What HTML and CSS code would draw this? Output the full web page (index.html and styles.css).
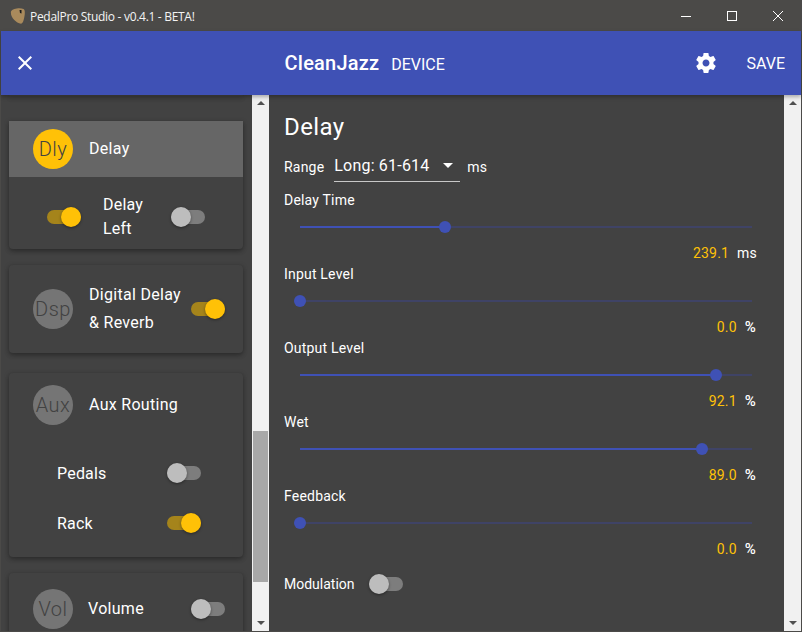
FILE: index.html
```html
<!DOCTYPE html>
<html lang="en">
<head>
    <meta charset="UTF-8">
    <title>PedalPro Studio</title>
    <link rel="stylesheet" href="styles.css">
</head>
<body>
<div class="window">
    <div class="titlebar">
        <svg class="app-icon" width="16" height="16" viewBox="0 0 16 16">
            <path d="M1 3.500 C2.500 0.500 10 -0.500 13.500 1 C15.500 2 15 7 13.500 12.500 C13 15 11.500 16 10 15.500 C6 14.500 0 9 1 3.500 Z" fill="#a98a5c"/>
            <path d="M9.500 2 L11.500 2 L11.500 5.500 L10 5 Z" fill="#1c1c1c"/>
        </svg>
        <span class="title-text">PedalPro Studio - v0.4.1 - BETA!</span>
        <div class="win-buttons">
            <svg width="46" height="30" viewBox="0 0 46 30"><path d="M18 15.500 H28" stroke="#fff" fill="none"/></svg>
            <svg width="46" height="30" viewBox="0 0 46 30"><rect x="18.500" y="10.500" width="9" height="9" stroke="#fff" fill="none"/></svg>
            <svg width="46" height="30" viewBox="0 0 46 30"><path d="M18 10 L28 20 M28 10 L18 20" stroke="#fff" fill="none"/></svg>
        </div>
    </div>

    <div class="appbar">
        <svg class="close-icon" width="24" height="24" viewBox="0 0 24 24"><path fill="#fff" d="M19 6.410 17.590 5 12 10.590 6.410 5 5 6.410 10.590 12 5 17.590 6.410 19 12 13.410 17.590 19 19 17.590 13.410 12z"/></svg>
        <div class="appbar-title">
            <span class="preset-name">CleanJazz</span>
            <span class="preset-kind">DEVICE</span>
        </div>
        <svg class="gear-icon" width="24" height="24" viewBox="0 0 24 24"><path fill="#fff" d="M19.430 12.980c.04-.32.07-.64.07-.98s-.03-.66-.07-.98l2.110-1.650c.19-.15.24-.42.12-.64l-2-3.460c-.12-.22-.39-.3-.61-.22l-2.490 1c-.52-.4-1.080-.73-1.690-.98l-.38-2.650C14.460 2.180 14.250 2 14 2h-4c-.25 0-.46.18-.49.42l-.38 2.650c-.61.25-1.170.59-1.690.98l-2.490-1c-.23-.09-.49 0-.61.22l-2 3.460c-.13.22-.07.49.12.64l2.110 1.650c-.04.32-.07.65-.07.98s.03.66.07.98l-2.110 1.650c-.19.15-.24.42-.12.64l2 3.460c.12.22.39.3.61.22l2.490-1c.52.4 1.080.73 1.690.98l.38 2.650c.03.24.24.42.49.42h4c.25 0 .46-.18.49-.42l.38-2.650c.61-.25 1.170-.59 1.690-.98l2.490 1c.23.09.49 0 .61-.22l2-3.460c.12-.22.07-.49-.12-.64l-2.110-1.650zM12 15.500c-1.930 0-3.500-1.570-3.500-3.500s1.570-3.500 3.500-3.500 3.500 1.570 3.500 3.500-1.570 3.500-3.500 3.500z"/></svg>
        <span class="save-btn">SAVE</span>
    </div>

    <div class="main">
        <div class="sidebar">
            <div class="card-list">
                <div class="card card-prev"></div>

                <div class="card card-delay">
                    <div class="card-head selected">
                        <div class="avatar on">Dly</div>
                        <div class="head-label">Delay</div>
                    </div>
                    <div class="delay-row">
                        <div class="switch checked"><div class="switch-track"></div><div class="switch-thumb"></div></div>
                        <div class="delay-label">Delay<br>Left</div>
                        <div class="switch"><div class="switch-track"></div><div class="switch-thumb"></div></div>
                    </div>
                </div>

                <div class="card card-dsp">
                    <div class="card-head">
                        <div class="avatar">Dsp</div>
                        <div class="head-label two-line">Digital Delay<br>&amp; Reverb</div>
                        <div class="switch checked"><div class="switch-track"></div><div class="switch-thumb"></div></div>
                    </div>
                </div>

                <div class="card card-aux">
                    <div class="card-head">
                        <div class="avatar">Aux</div>
                        <div class="head-label">Aux Routing</div>
                    </div>
                    <div class="aux-row aux-first">
                        <span>Pedals</span>
                        <div class="switch"><div class="switch-track"></div><div class="switch-thumb"></div></div>
                    </div>
                    <div class="aux-row">
                        <span>Rack</span>
                        <div class="switch checked"><div class="switch-track"></div><div class="switch-thumb"></div></div>
                    </div>
                </div>

                <div class="card card-vol">
                    <div class="card-head">
                        <div class="avatar">Vol</div>
                        <div class="head-label">Volume</div>
                        <div class="switch"><div class="switch-track"></div><div class="switch-thumb"></div></div>
                    </div>
                </div>
            </div>
            <div class="scrollbar">
                <div class="arrow-up"></div>
                <div class="thumb thumb-side"></div>
                <div class="arrow-down"></div>
            </div>
        </div>

        <div class="content">
            <div class="panel">
                <h1>Delay</h1>
                <div class="range-row">
                    <span class="range-label">Range</span>
                    <div class="select"><span>Long: 61-614</span><i class="caret"></i></div>
                    <span class="range-unit">ms</span>
                </div>

                <div class="param">
                    <div class="param-name">Delay Time</div>
                    <div class="slider"><div class="slider-fill" style="width: 32%"><div class="slider-thumb"></div></div></div>
                    <div class="param-value"><span class="num">239.1</span><span class="unit">ms</span></div>
                </div>
                <div class="param">
                    <div class="param-name">Input Level</div>
                    <div class="slider"><div class="slider-fill" style="width: 0%"><div class="slider-thumb"></div></div></div>
                    <div class="param-value"><span class="num">0.0</span><span class="unit pct">%</span></div>
                </div>
                <div class="param">
                    <div class="param-name">Output Level</div>
                    <div class="slider"><div class="slider-fill" style="width: 92.1%"><div class="slider-thumb"></div></div></div>
                    <div class="param-value"><span class="num">92.1</span><span class="unit pct">%</span></div>
                </div>
                <div class="param">
                    <div class="param-name">Wet</div>
                    <div class="slider"><div class="slider-fill" style="width: 89%"><div class="slider-thumb"></div></div></div>
                    <div class="param-value"><span class="num">89.0</span><span class="unit pct">%</span></div>
                </div>
                <div class="param">
                    <div class="param-name">Feedback</div>
                    <div class="slider"><div class="slider-fill" style="width: 0%"><div class="slider-thumb"></div></div></div>
                    <div class="param-value"><span class="num">0.0</span><span class="unit pct">%</span></div>
                </div>

                <div class="modulation">
                    <span>Modulation</span>
                    <div class="switch"><div class="switch-track"></div><div class="switch-thumb"></div></div>
                </div>
            </div>
            <div class="scrollbar">
                <div class="arrow-up"></div>
                <div class="thumb-space"></div>
                <div class="arrow-down"></div>
            </div>
        </div>
    </div>
</div>
</body>
</html>
```

FILE: styles.css
```css
/* Ventana */
* {
    box-sizing: border-box;
}
html, body {
    margin: 0;
    padding: 0;
    height: 100%;
    overflow: hidden;
}
body {
    font-family: Roboto, "Liberation Sans", sans-serif;
    color: #fff;
    background: #424242;
    letter-spacing: 0.2px;
}
.window {
    width: 802px;
    height: 632px;
    display: flex;
    flex-direction: column;
    border: 1px solid #4b4a48;
}
.titlebar {
    height: 30px;
    flex: none;
    display: flex;
    align-items: center;
    background: #4b4a48;
    padding-left: 9px;
}
.app-icon {
    flex: none;
}
.title-text {
    margin-left: 4px;
    font-family: "Open Sans", sans-serif;
    font-size: 12px;
    letter-spacing: -0.3px;
    color: #f4f4f4;
}
.win-buttons {
    margin-left: auto;
    display: flex;
}
.win-buttons svg {
    display: block;
}

/* Barra azul */
.appbar {
    height: 64px;
    flex: none;
    display: flex;
    align-items: center;
    background: #3f51b5;
    position: relative;
    z-index: 2;
    box-shadow: 0 2px 4px rgba(0, 0, 0, 0.3);
    padding: 0 16px 0 12px;
}
.appbar-title {
    flex: 1;
    display: flex;
    justify-content: center;
    align-items: baseline;
    padding-right: 2px;
}
.preset-name {
    font-size: 20px;
    font-weight: 500;
}
.preset-kind {
    font-size: 16px;
    margin-left: 12px;
    letter-spacing: 0;
}
.gear-icon {
    margin-right: 28px;
}
.save-btn {
    font-size: 16px;
    letter-spacing: 0;
}

/* Columnas */
.main {
    flex: 1;
    min-height: 0;
    display: flex;
}
.sidebar {
    width: 268px;
    flex: none;
    display: flex;
    background: #424242;
}
.content {
    flex: 1;
    display: flex;
    min-width: 0;
}
.scrollbar {
    width: 17px;
    flex: none;
    display: flex;
    flex-direction: column;
    align-items: center;
    background: #f1f1f1;
}
.arrow-up, .arrow-down {
    width: 0;
    height: 0;
    flex: none;
    border-left: 4px solid transparent;
    border-right: 4px solid transparent;
}
.arrow-up {
    margin-top: 6px;
    border-bottom: 4px solid #505050;
}
.arrow-down {
    margin-top: auto;
    margin-bottom: 6px;
    border-top: 4px solid #505050;
}
.thumb {
    width: 15px;
    background: #a8a8a8;
}
.thumb-side {
    margin-top: 326px;
    height: 151px;
}

/* Tarjetas */
.card-list {
    flex: 1;
    min-width: 0;
    padding: 0 9px 0 8px;
    overflow: hidden;
}
.card {
    background: #424242;
    border-radius: 4px;
    box-shadow: 0 1px 5px rgba(0, 0, 0, 0.25), 0 3px 4px rgba(0, 0, 0, 0.16);
    overflow: hidden;
}
.card-prev {
    height: 1px;
}
.card-delay {
    margin-top: 25px;
    height: 128px;
    border-radius: 0 0 4px 4px;
}
.card-dsp {
    margin-top: 16px;
    height: 88px;
}
.card-aux {
    margin-top: 20px;
    height: 184px;
}
.card-vol {
    margin-top: 16px;
    height: 72px;
}
.card-head {
    height: 56px;
    display: flex;
    align-items: center;
    padding-left: 24px;
}
.card-dsp .card-head {
    height: 88px;
}
.card-vol .card-head {
    height: 72px;
}
.card-aux .card-head {
    height: 64px;
}
.selected {
    background: #666;
}
.avatar {
    width: 40px;
    height: 40px;
    flex: none;
    border-radius: 50%;
    background: #757575;
    color: #424242;
    font-size: 20px;
    font-weight: 300;
    letter-spacing: 0.5px;
    display: flex;
    align-items: center;
    justify-content: center;
}
.avatar.on {
    background: #ffc107;
}
.head-label {
    margin-left: 16px;
    font-size: 16px;
    line-height: 28px;
    letter-spacing: 0.3px;
    flex: 1;
}
.card-vol .head-label {
    margin-left: 15px;
}
.delay-row {
    height: 72px;
    display: flex;
    align-items: center;
    padding: 8px 0 0 38px;
}
.delay-label {
    margin-left: 22px;
    width: 68px;
    font-size: 16px;
    line-height: 24px;
}
.aux-row {
    height: 50px;
    display: flex;
    align-items: center;
    justify-content: space-between;
    padding: 0 42px 0 48px;
    font-size: 16px;
}
.aux-first {
    margin-top: 11px;
}
.card-dsp .switch,
.card-vol .switch {
    margin-right: 18px;
}

/* Interruptor */
.switch {
    position: relative;
    width: 34px;
    height: 20px;
    flex: none;
}
.switch-track {
    position: absolute;
    top: 3px;
    left: 0;
    width: 34px;
    height: 14px;
    border-radius: 7px;
    background: #7d7d7d;
}
.switch-thumb {
    position: absolute;
    top: 0;
    left: 0;
    width: 20px;
    height: 20px;
    border-radius: 50%;
    background: #bdbdbd;
    box-shadow: 0 1px 3px rgba(0, 0, 0, 0.4);
}
.checked .switch-track {
    background: #a5841b;
}
.checked .switch-thumb {
    left: 14px;
    background: #ffc107;
}

/* Panel derecho */
.panel {
    flex: 1;
    min-width: 0;
    padding: 16px 16px 0 15px;
    overflow: hidden;
}
h1 {
    margin: 0;
    font-size: 24px;
    font-weight: 400;
    line-height: 32px;
    letter-spacing: 0.4px;
}
.range-row {
    display: flex;
    align-items: center;
    height: 46px;
    font-size: 14px;
    margin-top: 1px;
}
.select {
    margin-left: 10px;
    width: 126px;
    height: 30px;
    border-bottom: 1px solid #c8c8c8;
    display: flex;
    align-items: center;
    font-size: 16px;
    padding-bottom: 2px;
}
.caret {
    margin-left: auto;
    margin-right: 7px;
    width: 0;
    height: 0;
    border-left: 5px solid transparent;
    border-right: 5px solid transparent;
    border-top: 5px solid #fff;
}
.range-unit {
    margin-left: 7px;
}
.param {
    height: 74px;
    display: flex;
    flex-direction: column;
}
.param-name {
    font-size: 14px;
    line-height: 20px;
}
.slider {
    position: relative;
    margin: 16px 16px 0;
    height: 2px;
    background: #3f4366;
    flex: none;
}
.slider-fill {
    position: relative;
    height: 2px;
    background: #3f51b5;
}
.slider-thumb {
    position: absolute;
    right: -6px;
    top: -5px;
    width: 12px;
    height: 12px;
    border-radius: 50%;
    background: #3f51b5;
}
.param-value {
    margin-top: 15px;
    display: flex;
    justify-content: flex-end;
    align-items: baseline;
    padding-right: 11px;
    font-size: 14px;
    line-height: 20px;
}
.num {
    color: #ffc107;
}
.unit {
    margin-left: 8px;
}
.pct {
    font-size: 15px;
    font-weight: 500;
    margin-right: 1px;
}
.modulation {
    display: flex;
    align-items: center;
    font-size: 14px;
    letter-spacing: 0;
    margin-top: 12px;
    height: 24px;
}
.modulation .switch {
    margin-left: 14px;
}
```
